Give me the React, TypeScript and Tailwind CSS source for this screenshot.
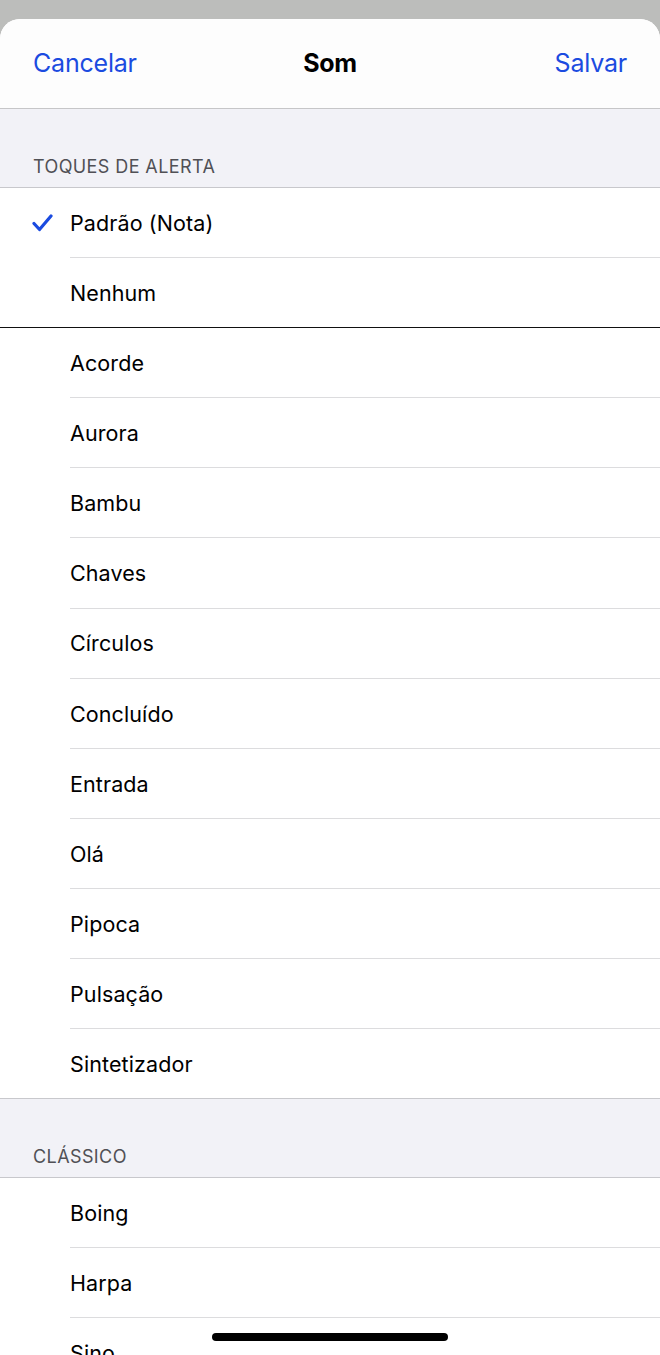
const alertTones = [
  'Padrão (Nota)',
  'Nenhum',
  'Acorde',
  'Aurora',
  'Bambu',
  'Chaves',
  'Círculos',
  'Concluído',
  'Entrada',
  'Olá',
  'Pipoca',
  'Pulsação',
  'Sintetizador',
]

const classicTones = ['Boing', 'Harpa', 'Sino', 'Sirene']

export default function App() {
  const selected = 'Padrão (Nota)'

  return (
    <div
      className="relative h-[1355px] w-[660px] overflow-hidden bg-[#bcbdbb]"
      style={{ fontFamily: 'Inter, "Noto Sans", sans-serif' }}
    >
      <div className="mt-[19px] overflow-hidden rounded-t-[20px] bg-white">
        {/* barra de navegação */}
        <header className="grid h-[90px] grid-cols-3 items-center border-b border-[#c6c6c8] bg-[#fdfdfd] px-[33px]">
          <button className="justify-self-start text-[25px] tracking-[-0.2px] text-[#1b4be0]">
            Cancelar
          </button>
          <h1 className="justify-self-center text-[25px] font-bold tracking-[-0.3px] text-black">Som</h1>
          <button className="justify-self-end text-[25px] tracking-[-0.2px] text-[#1b4be0]">
            Salvar
          </button>
        </header>

        <SectionHeader title="TOQUES DE ALERTA" />
        <ul>
          {alertTones.map((name, i) => (
            <Row
              key={name}
              name={name}
              checked={name === selected}
              divider={i === 1 ? 'dark' : i === alertTones.length - 1 ? 'full' : 'inset'}
            />
          ))}
        </ul>

        <SectionHeader title="CLÁSSICO" />
        <ul>
          {classicTones.map((name) => (
            <Row key={name} name={name} divider="inset" />
          ))}
        </ul>
      </div>

      {/* indicador home */}
      <div className="absolute bottom-[14px] left-[212px] h-[8px] w-[236px] rounded-full bg-black" />
    </div>
  )
}

function SectionHeader({ title }: { title: string }) {
  return (
    <div className="flex h-[79px] items-end border-b border-[#c8c8cc] bg-[#f2f2f7] px-[33px] pb-[9px]">
      <span className="text-[18px] leading-[22px] tracking-[0.4px] text-[#505055]">{title}</span>
    </div>
  )
}

function Row({
  name,
  checked,
  divider,
}: {
  name: string
  checked?: boolean
  divider: 'inset' | 'full' | 'dark'
}) {
  return (
    <li
      className={
        divider === 'inset'
          ? 'relative flex h-[70.1px] items-center bg-white'
          : divider === 'full'
            ? 'relative flex h-[70.1px] items-center border-b border-[#c8c8cc] bg-white'
            : 'relative flex h-[70.1px] items-center border-b border-[#111111] bg-white'
      }
    >
      <span className="flex w-[70px] shrink-0 justify-start pl-[32px]">
        {checked && (
          <svg width="21" height="18" viewBox="0 0 21 18" fill="none">
            <path
              d="M2 9.5 L7.5 15.5 L19 2"
              stroke="#1b4be0"
              strokeWidth="3.2"
              strokeLinecap="round"
              strokeLinejoin="round"
            />
          </svg>
        )}
      </span>
      <span className="text-[21.5px] tracking-[0.1px] text-black">{name}</span>
      {divider === 'inset' && (
        <span className="absolute bottom-0 left-[70px] right-0 h-px bg-[#dcdcde]" />
      )}
    </li>
  )
}
